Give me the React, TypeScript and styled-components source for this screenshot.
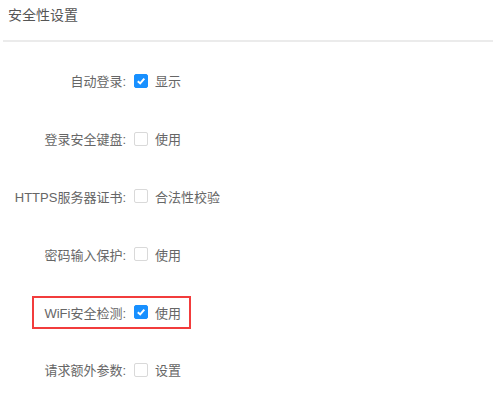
import React, { useState } from "react";
import styled, { createGlobalStyle } from "styled-components";

const GlobalStyle = createGlobalStyle`
  body {
    margin: 0;
    background: #fff;
    font-family: "Liberation Sans", "Noto Sans CJK SC", sans-serif;
  }
`;

const Page = styled.div`
  width: 493px;
  height: 399px;
  overflow: hidden;
  background: #fff;
`;
const Header = styled.div`
  height: 28px;
  padding: 0 8px;
  display: flex;
  align-items: center;
  font-size: 14px;
  color: #555;
`;
const Divider = styled.div`
  margin: 12px 0 0 3px;
  height: 2px;
  background: #ebebeb;
`;
const Form = styled.div`
  padding-top: 10px;
  display: flex;
  flex-direction: column;
`;
const Row = styled.div`
  position: relative;
  height: 57.8px;
  display: grid;
  grid-template-columns: 126px 14px auto;
  column-gap: 7px;
  align-items: center;
  font-size: 13px;
  color: #666;
`;
const Label = styled.span`
  text-align: right;
  white-space: nowrap;
`;
const Option = styled.span`
  margin-left: 1px;
  white-space: nowrap;
`;
const Box = styled.span<{ $checked: boolean }>`
  width: 14px;
  height: 14px;
  margin-left: 1px;
  box-sizing: border-box;
  border-radius: 2px;
  border: 1px solid ${(p) => (p.$checked ? "#1890ff" : "#d9d9d9")};
  background: ${(p) => (p.$checked ? "#1890ff" : "#fff")};
  display: flex;
  align-items: center;
  justify-content: center;
  cursor: pointer;
`;
const Frame = styled.div`
  position: absolute;
  left: 32px;
  top: 13px;
  width: 159px;
  height: 33px;
  box-sizing: border-box;
  border: 2px solid #f23c3c;
  pointer-events: none;
`;

const items = [
  { label: "自动登录:", text: "显示", checked: true },
  { label: "登录安全键盘:", text: "使用", checked: false },
  { label: "HTTPS服务器证书:", text: "合法性校验", checked: false },
  { label: "密码输入保护:", text: "使用", checked: false },
  { label: "WiFi安全检测:", text: "使用", checked: true, mark: true },
  { label: "请求额外参数:", text: "设置", checked: false },
];

const Check = ({ checked, onToggle }: { checked: boolean; onToggle: () => void }) => (
  <Box $checked={checked} onClick={onToggle}>
    {checked && (
      <svg width="10" height="10" viewBox="0 0 10 10">
        <path d="M1.8 5.2 L4.2 7.4 L8.3 2.7" fill="none" stroke="#fff" strokeWidth="2" />
      </svg>
    )}
  </Box>
);

const App = () => {
  const [values, setValues] = useState<boolean[]>(items.map((i) => i.checked));
  const toggle = (idx: number) => {
    setValues(values.map((v, i) => (i === idx ? !v : v)));
  };
  return (
    <Page>
      <GlobalStyle />
      <Header>安全性设置</Header>
      <Divider />
      <Form>
        {items.map((item, idx) => (
          <Row key={item.label}>
            <Label>{item.label}</Label>
            <Check checked={values[idx]} onToggle={() => toggle(idx)} />
            <Option>{item.text}</Option>
            {item.mark && <Frame />}
          </Row>
        ))}
      </Form>
    </Page>
  );
};

export default App;
